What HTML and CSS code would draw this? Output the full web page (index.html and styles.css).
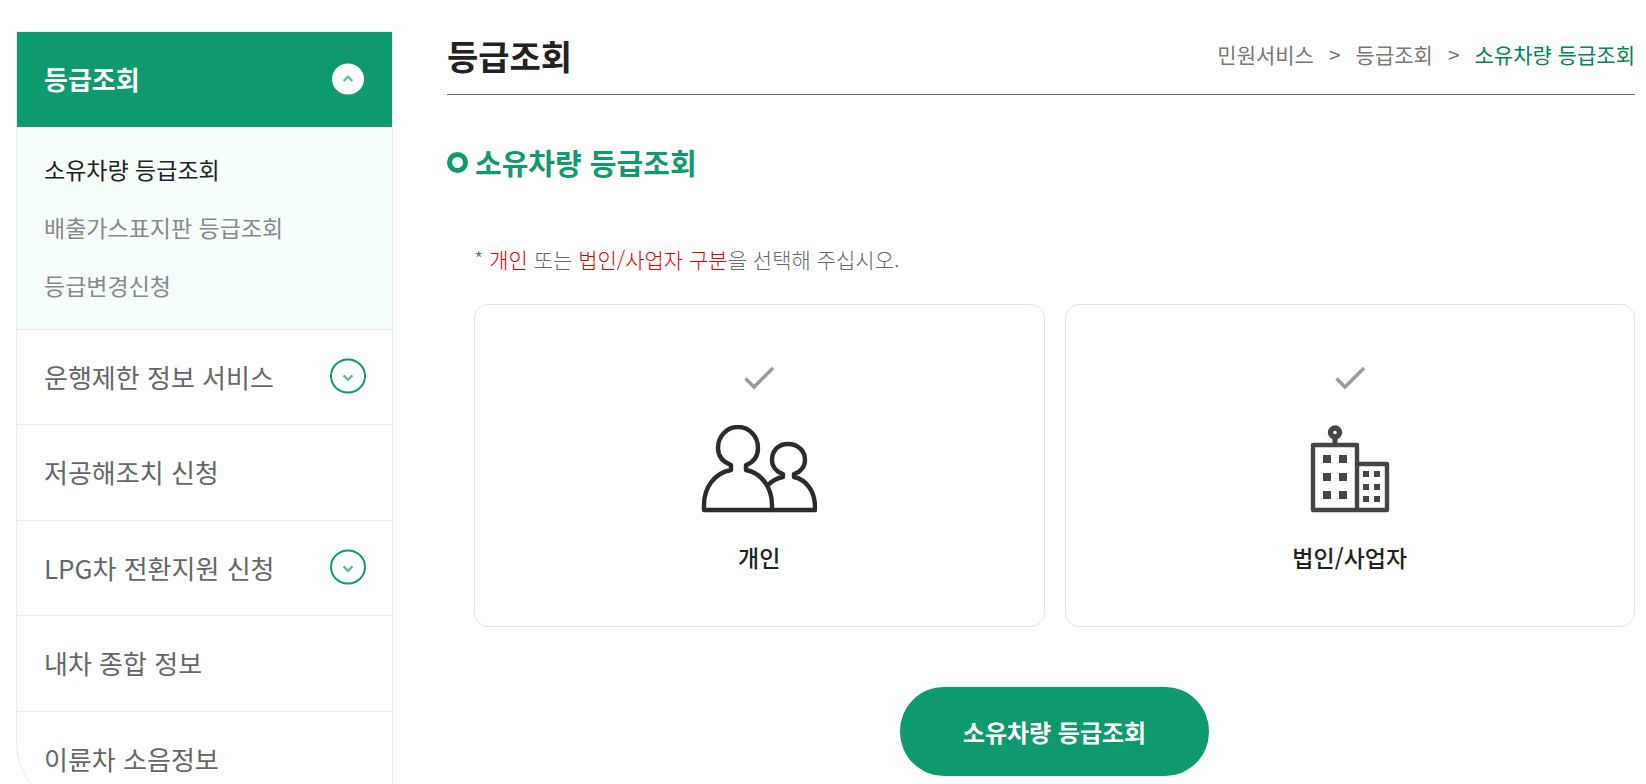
FILE: index.html
```html
<!DOCTYPE html>
<html lang="ko">
<head>
<meta charset="utf-8">
<meta name="viewport" content="width=device-width, initial-scale=1">
<title>소유차량 등급조회</title>
<link rel="stylesheet" href="styles.css">
</head>
<body>
<div class="page">
  <nav class="side" aria-label="등급조회 메뉴">
    <button class="side-row side-row-open" type="button" aria-expanded="true">
      <span>등급조회</span>
      <svg class="toggle" viewBox="0 0 36 36" aria-hidden="true"><ellipse cx="18" cy="18" rx="16" ry="15.6" fill="#fff"/><path d="M13.6 20 18 15.600l4.400 4.400" fill="none" stroke="#5fbd9b" stroke-width="2.400"/></svg>
    </button>
    <ul class="sub">
      <li><a class="sub-link sub-link-on" href="#" aria-current="page">소유차량 등급조회</a></li>
      <li><a class="sub-link" href="#">배출가스표지판 등급조회</a></li>
      <li><a class="sub-link" href="#">등급변경신청</a></li>
    </ul>
    <button class="side-row" type="button" aria-expanded="false">
      <span>운행제한 정보 서비스</span>
      <svg class="toggle" viewBox="0 0 36 36" aria-hidden="true"><ellipse cx="18" cy="18" rx="17" ry="16.500" fill="#fff" stroke="#0f996e" stroke-width="2"/><path d="M13.600 17.400 18 21.800 22.400 17.400" fill="none" stroke="#5fbd9b" stroke-width="2.400"/></svg>
    </button>
    <a class="side-row" href="#">저공해조치 신청</a>
    <button class="side-row" type="button" aria-expanded="false">
      <span>LPG차 전환지원 신청</span>
      <svg class="toggle" viewBox="0 0 36 36" aria-hidden="true"><ellipse cx="18" cy="18" rx="17" ry="16.500" fill="#fff" stroke="#0f996e" stroke-width="2"/><path d="M13.600 17.400 18 21.800 22.400 17.400" fill="none" stroke="#5fbd9b" stroke-width="2.400"/></svg>
    </button>
    <a class="side-row" href="#">내차 종합 정보</a>
    <a class="side-row" href="#">이륜차 소음정보</a>
  </nav>

  <main class="main">
    <header class="head">
      <h1 class="title">등급조회</h1>
      <nav class="crumbs" aria-label="현재 위치">
        <a class="crumb" href="#">민원서비스</a>
        <span>&gt;</span>
        <a class="crumb" href="#">등급조회</a>
        <span>&gt;</span>
        <a class="crumb crumb-on" href="#" aria-current="page">소유차량 등급조회</a>
      </nav>
    </header>

    <h2 class="section-title"><span class="ring"></span>소유차량 등급조회</h2>

    <div class="content">
      <p class="note">* <em>개인</em> 또는 <em>법인/사업자 구분</em>을 선택해 주십시오.</p>
      <div class="cards">
        <button class="card" type="button">
          <svg class="check" viewBox="0 0 30 24" aria-hidden="true"><path d="M1.500 12.500 10 21 29 2" fill="none" stroke="#9b9b9b" stroke-width="3.400"/></svg>
          <svg class="picture" viewBox="0 0 116 88" aria-hidden="true">
            <g fill="none" stroke="#2b2b2b" stroke-width="4.400" stroke-linejoin="round">
              <path d="M30 40v5C13 48 3 63 3 80v5h68v-5C71 63 61 48 45 45v-5C53 37 57 31 57 23 57 11 48 2 37 2S17 11 17 23c0 8 5 14 13 17Z"/>
              <path d="M71 85h43v-3c0-15-8-27-21-30v-3c7-2 11-8 11-14 0-9-7-16-17-16s-16 7-16 16c0 6 4 12 11 14v3c-6 1-11 4-15 8"/>
            </g>
          </svg>
          <span>개인</span>
        </button>
        <button class="card" type="button">
          <svg class="check" viewBox="0 0 30 24" aria-hidden="true"><path d="M1.500 12.500 10 21 29 2" fill="none" stroke="#9b9b9b" stroke-width="3.400"/></svg>
          <svg class="picture" viewBox="0 0 116 88" aria-hidden="true">
            <g fill="none" stroke="#454545" stroke-width="4.400" stroke-linejoin="round">
              <path d="M21 20h44v65H21ZM65 39h30v46H65"/>
              <circle cx="43" cy="7.500" r="4.500" stroke-width="5.400"/>
              <path d="M43 12v8" stroke-width="5"/>
            </g>
            <path fill="#454545" d="M31 30h8v8h-8zM47 30h8v8h-8zM31 48h8v8h-8zM47 48h8v8h-8zM31 66h8v8h-8zM47 66h8v8h-8zM71 46h6v6h-6zM82 46h6v6h-6zM71 59h6v6h-6zM82 59h6v6h-6zM71 71h6v6h-6zM82 71h6v6h-6z"/>
          </svg>
          <span>법인/사업자</span>
        </button>
      </div>
      <button class="submit" type="button">소유차량 등급조회</button>
    </div>
  </main>
</div>
</body>
</html>
```
FILE: styles.css
```css
* {
  box-sizing: border-box;
}

body {
  margin: 0;
  background: #fff;
  color: #222;
  font-family: "Noto Sans CJK KR", "Noto Sans", sans-serif;
}

button {
  font: inherit;
  color: inherit;
  cursor: pointer;
}

a {
  color: inherit;
  text-decoration: none;
}

.page {
  display: flex;
  align-items: flex-start;
  gap: 54px;
  height: 100vh;
  padding: 31px 11px 0 16px;
  overflow: hidden;
}

/* Side menu */
.side {
  flex: 0 0 377px;
  border: 1px solid #ededed;
  border-bottom-left-radius: 64px;
}

.side-row {
  display: flex;
  align-items: center;
  justify-content: space-between;
  width: 100%;
  padding: 24px 26px 25px 27px;
  border: 0;
  border-top: 1px solid #ededed;
  background: none;
  color: #666;
  font-size: 26px;
  line-height: 1.75;
  text-align: left;
}

.side-row-open {
  border-top: 0;
  background: #0f996e;
  color: #fff;
  font-weight: 700;
}

.toggle {
  width: 36px;
  height: 36px;
}

.sub {
  margin: 0;
  padding: 12px 27px 15px;
  border-top: 1px solid #ededed;
  background: #f6fffc;
  list-style: none;
}

.sub-link {
  display: block;
  color: #888;
  font-size: 23px;
  line-height: 58px;
}

.sub-link-on {
  color: #222;
}

/* Main column */
.main {
  flex: 1;
  min-width: 0;
}

.head {
  display: flex;
  align-items: flex-start;
  justify-content: space-between;
  height: 64px;
  border-bottom: 1px solid #666;
}

.title {
  margin: 0;
  font-size: 34px;
  font-weight: 700;
  line-height: 50px;
}

.crumbs {
  display: flex;
  gap: 15px;
  color: #777;
  font-size: 21px;
  line-height: 46px;
}

.crumb-on {
  color: #008558;
}

.section-title {
  display: flex;
  align-items: center;
  gap: 7px;
  margin: 45px 0 0;
  color: #0f996e;
  font-size: 29px;
  font-weight: 700;
  line-height: 44px;
}

.ring {
  width: 21px;
  height: 21px;
  border: 5px solid #0f996e;
  border-radius: 50%;
}

.content {
  padding-left: 27px;
}

.note {
  margin: 59px 0 29px;
  color: #666;
  font-size: 21px;
  font-weight: 300;
  line-height: 32px;
}

.note em {
  color: #e60000;
  font-style: normal;
}

.cards {
  display: grid;
  grid-template-columns: 1fr 1fr;
  gap: 20px;
}

.card {
  display: flex;
  flex-direction: column;
  align-items: center;
  padding: 61px 20px 51px;
  border: 1px solid #e3e3e3;
  border-radius: 14px;
  background: #fff;
  color: #222;
  font-size: 23px;
  font-weight: 500;
  line-height: 36px;
}

.check {
  width: 30px;
  height: 24px;
}

.picture {
  width: 116px;
  height: 88px;
  margin: 35px 0 26px;
}

.submit {
  display: block;
  margin: 60px auto 0;
  padding: 26px 63px;
  border: 0;
  border-radius: 44px;
  background: #0f996e;
  color: #fff;
  font-size: 24px;
  font-weight: 700;
  line-height: 37px;
}
```
